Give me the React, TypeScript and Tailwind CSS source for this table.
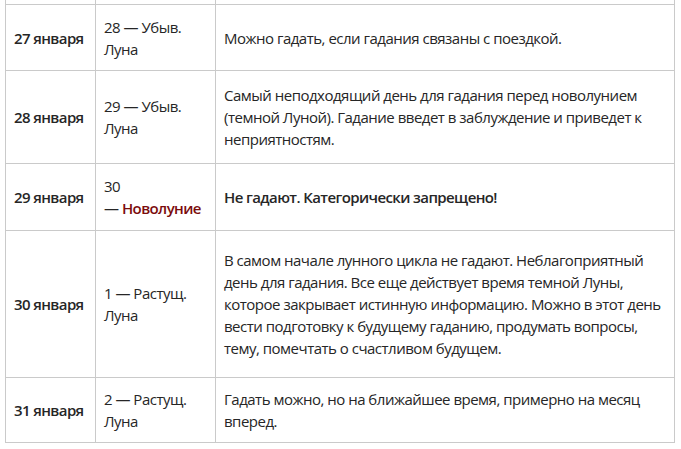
import React from "react";

type Row = {
  h: string;
  date: string;
  moon: React.ReactNode;
  text: React.ReactNode;
};

const rows: Row[] = [
  {
    h: "h-[66px]",
    date: "27 января",
    moon: (
      <>
        28 — Убыв.
        <br />
        Луна
      </>
    ),
    text: <>Можно гадать, если гадания связаны с поездкой.</>,
  },
  {
    h: "h-[93px]",
    date: "28 января",
    moon: (
      <>
        29 — Убыв.
        <br />
        Луна
      </>
    ),
    text: (
      <>
        Самый неподходящий день для гадания перед новолунием
        <br />
        (темной Луной). Гадание введет в заблуждение и приведет к
        <br />
        неприятностям.
      </>
    ),
  },
  {
    h: "h-[67px]",
    date: "29 января",
    moon: (
      <>
        30
        <br />—{" "}
        <b className="font-semibold tracking-[-0.6px] text-[#7b0c0c]">Новолуние</b>
      </>
    ),
    text: (
      <b className="font-semibold tracking-[-0.6px]">
        Не гадают. Категорически запрещено!
      </b>
    ),
  },
  {
    h: "h-[147px]",
    date: "30 января",
    moon: (
      <>
        1 — Растущ.
        <br />
        Луна
      </>
    ),
    text: (
      <>
        В самом начале лунного цикла не гадают. Неблагоприятный
        <br />
        день для гадания. Все еще действует время темной Луны,
        <br />
        которое закрывает истинную информацию. Можно в этот день
        <br />
        вести подготовку к будущему гаданию, продумать вопросы,
        <br />
        тему, помечтать о счастливом будущем.
      </>
    ),
  },
  {
    h: "h-[65px]",
    date: "31 января",
    moon: (
      <>
        2 — Растущ.
        <br />
        Луна
      </>
    ),
    text: (
      <>
        Гадать можно, но на ближайшее время, примерно на месяц
        <br />
        вперед.
      </>
    ),
  },
];

export default function App() {
  return (
    <div
      className="w-[681px] h-[449px] bg-white overflow-hidden text-[#262626] text-[15px] leading-[22px] tracking-[-0.5px]"
      style={{ fontFamily: '"Open Sans", "Noto Sans", sans-serif' }}
    >
      <div className="ml-[5px] w-[670px] border-l border-r border-[#cacaca]">
        <div className="grid grid-cols-[90px_120px_458px] h-[5px] border-b border-[#cacaca]">
          <div className="border-r border-[#cacaca]" />
          <div className="border-r border-[#cacaca]" />
          <div />
        </div>
        {rows.map((r) => (
          <div
            key={r.date}
            className={`grid grid-cols-[90px_120px_458px] border-b border-[#cacaca] ${r.h}`}
          >
            <div className="flex items-center border-r border-[#cacaca] pl-2 font-semibold tracking-[-0.6px] whitespace-nowrap">
              {r.date}
            </div>
            <div className="flex items-center border-r border-[#cacaca] pl-2 whitespace-nowrap">
              <div>{r.moon}</div>
            </div>
            <div className="flex items-center pl-2 whitespace-nowrap">
              <div>{r.text}</div>
            </div>
          </div>
        ))}
      </div>
    </div>
  );
}
